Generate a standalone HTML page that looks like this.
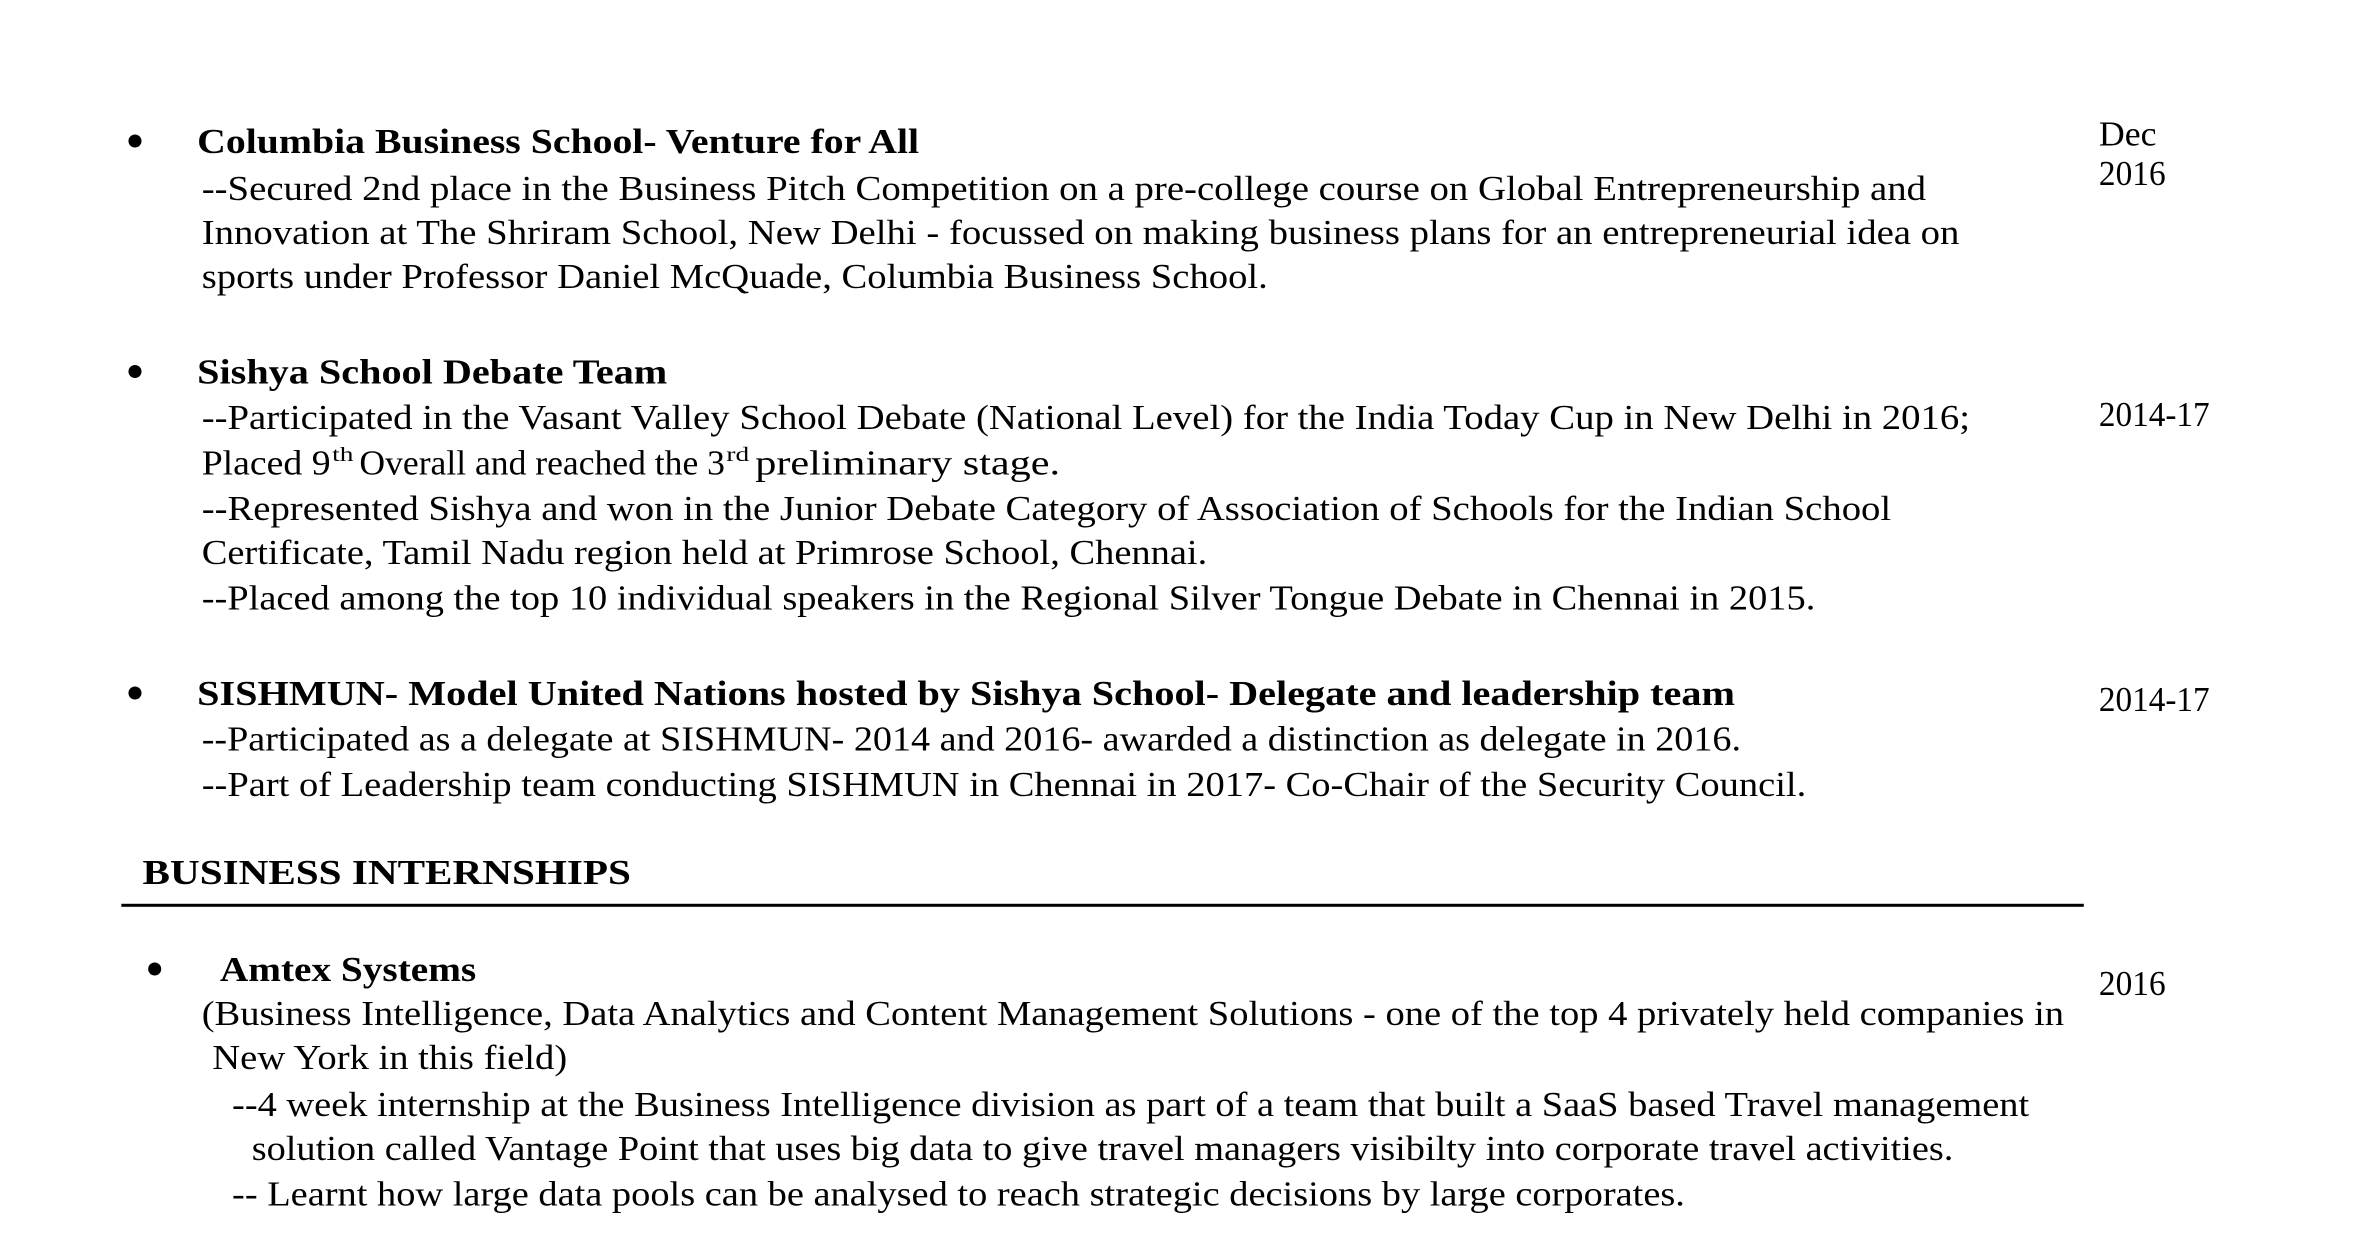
<!DOCTYPE html>
<html><head><meta charset="utf-8"><style>
html,body{margin:0;padding:0;background:#fff;width:2378px;height:1248px;overflow:hidden}
svg{display:block}
text{font-family:"Liberation Serif",serif;font-size:23px;fill:#000}
.b{font-weight:bold}
.s{font-size:13px}
</style></head><body>
<svg width="2378" height="1248" viewBox="0 0 1568 823" preserveAspectRatio="none" xmlns="http://www.w3.org/2000/svg">
<circle cx="89" cy="93" r="4.3"/>
<text class="b" x="130" y="101" textLength="476" lengthAdjust="spacingAndGlyphs">Columbia Business School- Venture for All</text>
<text x="133" y="132" textLength="1137" lengthAdjust="spacingAndGlyphs">--Secured 2nd place in the Business Pitch Competition on a pre-college course on Global Entrepreneurship and</text>
<text x="133" y="161" textLength="1159" lengthAdjust="spacingAndGlyphs">Innovation at The Shriram School, New Delhi - focussed on making business plans for an entrepreneurial idea on</text>
<text x="133" y="190" textLength="703" lengthAdjust="spacingAndGlyphs">sports under Professor Daniel McQuade, Columbia Business School.</text>
<text x="1384" y="96" textLength="38" lengthAdjust="spacingAndGlyphs">Dec</text>
<text x="1384" y="122" textLength="44" lengthAdjust="spacingAndGlyphs">2016</text>

<circle cx="89" cy="245" r="4.3"/>
<text class="b" x="130" y="253" textLength="310" lengthAdjust="spacingAndGlyphs">Sishya School Debate Team</text>
<text x="133" y="283" textLength="1166" lengthAdjust="spacingAndGlyphs">--Participated in the Vasant Valley School Debate (National Level) for the India Today Cup in New Delhi in 2016;</text>
<text x="133" y="313" textLength="85" lengthAdjust="spacingAndGlyphs">Placed 9</text>
<text class="s" x="219" y="304" textLength="14" lengthAdjust="spacingAndGlyphs">th</text>
<text x="237" y="313" textLength="241" lengthAdjust="spacingAndGlyphs">Overall and reached the 3</text>
<text class="s" x="479" y="304" textLength="15" lengthAdjust="spacingAndGlyphs">rd</text>
<text x="498" y="313" textLength="201" lengthAdjust="spacingAndGlyphs">preliminary stage.</text>
<text x="133" y="343" textLength="1114" lengthAdjust="spacingAndGlyphs">--Represented Sishya and won in the Junior Debate Category of Association of Schools for the Indian School</text>
<text x="133" y="372" textLength="663" lengthAdjust="spacingAndGlyphs">Certificate, Tamil Nadu region held at Primrose School, Chennai.</text>
<text x="133" y="402" textLength="1064" lengthAdjust="spacingAndGlyphs">--Placed among the top 10 individual speakers in the Regional Silver Tongue Debate in Chennai in 2015.</text>
<text x="1384" y="281" textLength="73" lengthAdjust="spacingAndGlyphs">2014-17</text>

<circle cx="89" cy="457" r="4.3"/>
<text class="b" x="130" y="465" textLength="1014" lengthAdjust="spacingAndGlyphs">SISHMUN- Model United Nations hosted by Sishya School- Delegate and leadership team</text>
<text x="133" y="495" textLength="1015" lengthAdjust="spacingAndGlyphs">--Participated as a delegate at SISHMUN- 2014 and 2016- awarded a distinction as delegate in 2016.</text>
<text x="133" y="525" textLength="1058" lengthAdjust="spacingAndGlyphs">--Part of Leadership team conducting SISHMUN in Chennai in 2017- Co-Chair of the Security Council.</text>
<text x="1384" y="469" textLength="73" lengthAdjust="spacingAndGlyphs">2014-17</text>

<text class="b" x="94" y="583" textLength="322" lengthAdjust="spacingAndGlyphs">BUSINESS INTERNSHIPS</text>
<rect x="80" y="596" width="1294" height="2"/>

<circle cx="102" cy="639" r="4.3"/>
<text class="b" x="145" y="647" textLength="169" lengthAdjust="spacingAndGlyphs">Amtex Systems</text>
<text x="133" y="676" textLength="1228" lengthAdjust="spacingAndGlyphs">(Business Intelligence, Data Analytics and Content Management Solutions - one of the top 4 privately held companies in</text>
<text x="140" y="705" textLength="234" lengthAdjust="spacingAndGlyphs">New York in this field)</text>
<text x="153" y="736" textLength="1185" lengthAdjust="spacingAndGlyphs">--4 week internship at the Business Intelligence division as part of a team that built a SaaS based Travel management</text>
<text x="166" y="765" textLength="1122" lengthAdjust="spacingAndGlyphs">solution called Vantage Point that uses big data to give travel managers visibilty into corporate travel activities.</text>
<text x="153" y="795" textLength="958" lengthAdjust="spacingAndGlyphs">-- Learnt how large data pools can be analysed to reach strategic decisions by large corporates.</text>
<text x="1384" y="656" textLength="44" lengthAdjust="spacingAndGlyphs">2016</text>
</svg>
</body></html>
